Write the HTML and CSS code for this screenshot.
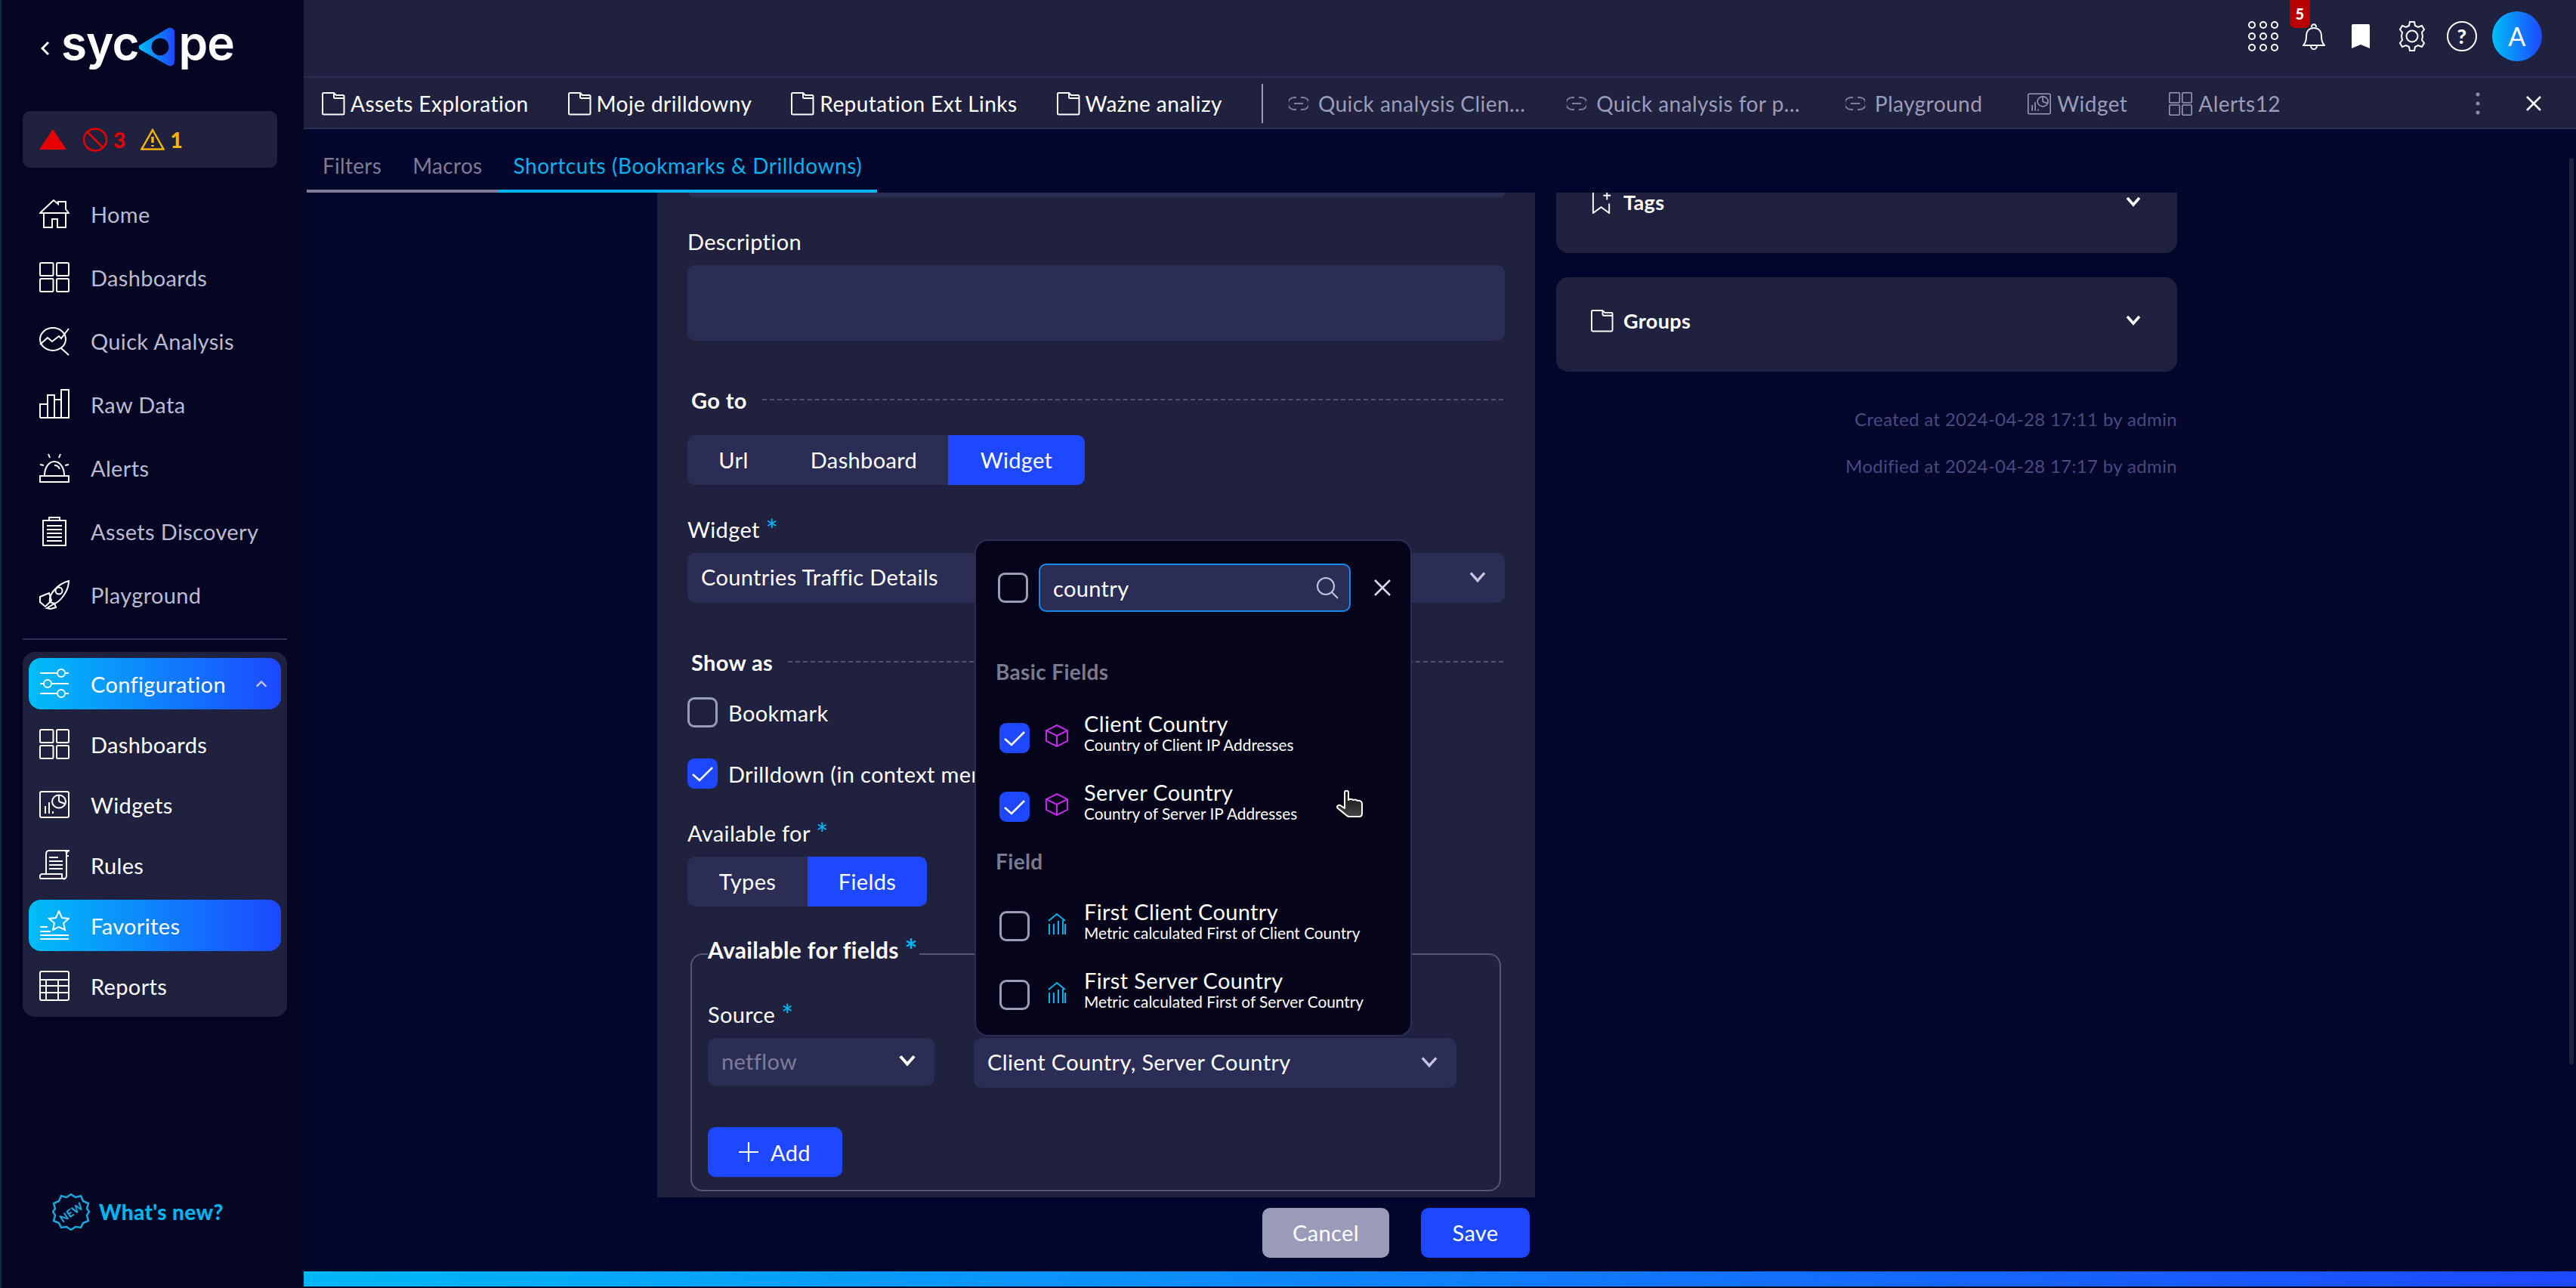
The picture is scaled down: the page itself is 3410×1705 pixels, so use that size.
FILE: index.html
```html
<!DOCTYPE html>
<html>
<head>
<meta charset="utf-8">
<title>Sycope</title>
<link rel="stylesheet" href="styles.css">
</head>
<body>
<svg class="defs" width="0" height="0">
  <symbol id="i-dash" viewBox="0 0 40 40"><rect x="1" y="1" width="17.500" height="17" rx="1.500"/><rect x="23" y="1" width="16" height="17" rx="1.500"/><rect x="1" y="22" width="17.500" height="17" rx="1.500"/><rect x="23" y="22" width="16" height="17" rx="1.500"/></symbol>
  <symbol id="i-folder" viewBox="0 0 32 32"><path d="M2 3.500a1.500 1.500 0 0 1 1.500-1.500H17l3 3h9a1.500 1.500 0 0 1 1.500 1.500V29a1.500 1.500 0 0 1-1.500 1.500H3.500A1.500 1.500 0 0 1 2 29zM17 2v5.500a1.500 1.500 0 0 0 1.500 1.500H30.500"/></symbol>
  <symbol id="i-link" viewBox="0 0 26 22"><path d="M10 3H7a8 8 0 0 0 0 16h3M16 3h3a8 8 0 0 1 0 16h-3M7 11h12"/></symbol>
  <symbol id="i-widget" viewBox="0 0 40 36"><rect x="1" y="1" width="38" height="34" rx="2"/><path d="M8 30V20M13 30V15M18 30v-3"/><ellipse cx="26" cy="14" rx="9" ry="8.500"/><path d="M26 14V5.500M26 14l8 3"/></symbol>
  <symbol id="i-check" viewBox="0 0 40 40"><path d="M7 21l9 8L33 12"/></symbol>
  <symbol id="i-chev" viewBox="0 0 20 14"><path d="M2 2l8 9 8-9"/></symbol>
  <symbol id="i-cube" viewBox="0 0 30 30"><path d="M15 1l14 7v14l-14 7-14-7V8zM1 8l14 7 14-7M15 15v14"/></symbol>
  <symbol id="i-metric" viewBox="0 0 24 30"><path d="M1 11l11-9 11 9M2 29V15M8 29V15M14 29V11M20 29V10M23 29V15"/></symbol>
</svg>

<div class="app">
  <aside class="sidebar">
    <div class="logo">
      <svg class="logo-back" viewBox="0 0 12 20"><path d="M10 2L2 10l8 8"/></svg>
      <span class="logo-text">syc</span>
      <svg class="logo-mark" viewBox="0 0 48 52">
        <defs><linearGradient id="lg" x1="0" x2="1" y1="0" y2="0"><stop offset="0" stop-color="#00bdf7"/><stop offset="1" stop-color="#1d48ff"/></linearGradient></defs>
        <path fill="url(#lg)" fill-rule="evenodd" d="M2 23L38 1.500c4-2 9 0 9 5V45.500c0 5-5 7.500-9 5L2 30c-3-2-3-5 0-7zM28 14.500a11.500 11.500 0 1 0 .01 0z"/>
      </svg>
      <span class="logo-text">pe</span>
    </div>

    <div class="alerts">
      <svg class="al-tri" viewBox="0 0 36 27"><path d="M18 0L36 27H0z"/></svg>
      <svg class="al-ban" viewBox="0 0 32 32"><ellipse cx="16" cy="16" rx="15" ry="14.500"/><path d="M6 6l20 20"/></svg>
      <span class="al-num red">3</span>
      <svg class="al-warn" viewBox="0 0 32 30"><path d="M16 2L30.500 27.500H1.500z"/><path class="warn-dot" d="M16 11v8M16 22v2"/></svg>
      <span class="al-num amber">1</span>
    </div>

    <nav class="nav">
      <a class="nav-item dim"><svg class="ico" viewBox="0 0 40 40"><path d="M1 19L19 2l6 5V4h10v10l4 5zM6 19v19h11V27h7v11h11V19"/></svg>Home</a>
      <a class="nav-item dim"><svg class="ico"><use href="#i-dash"/></svg>Dashboards</a>
      <a class="nav-item dim"><svg class="ico" viewBox="0 0 40 40"><ellipse cx="18" cy="18" rx="17" ry="15"/><path d="M1 25l10-9 6 5 9-7 3 3L39 4M29 30l10 9"/></svg>Quick Analysis</a>
      <a class="nav-item dim"><svg class="ico" viewBox="0 0 40 40"><path d="M1 38V20h10v18M11 38V8h9v30M20 38V14h9v24M29 38V1h10v37zM1 38h38"/></svg>Raw Data</a>
      <a class="nav-item dim"><svg class="ico" viewBox="0 0 40 40"><path d="M7 30c0-9 5-18 13-18s13 9 13 18M1 31h38v8H1zM1 16l5 1M39 16l-5 1M12 2l2 5M28 2l-2 5M20 17c4 0 6 2 7 5"/></svg>Alerts</a>
      <a class="nav-item dim"><svg class="ico" viewBox="0 0 40 40"><path d="M5 6h30v33H5zM13 6V2h14v4M10 13h20M10 18h20M10 23h20M10 28h20M10 33h20"/></svg>Assets Discovery</a>
      <a class="nav-item dim"><svg class="ico" viewBox="0 0 40 40"><path d="M14 30C12 20 24 6 39 2c0 14-12 28-19 30zM1 23l12-5 3 10-8 8-7-6zM10 38l10-6 2 5-7 2z"/><ellipse cx="26" cy="15" rx="4.500" ry="4.500"/></svg>Playground</a>
    </nav>

    <div class="nav-sep"></div>

    <div class="nav-group">
      <a class="nav-item pill"><svg class="ico" viewBox="0 0 40 40"><path d="M1 6h23M34 6h5M1 20h5M16 20h23M1 33h23M34 33h5"/><ellipse cx="29" cy="6" rx="5" ry="5"/><ellipse cx="11" cy="20" rx="5" ry="5"/><ellipse cx="29" cy="33" rx="5" ry="5"/></svg>Configuration<svg class="group-chev" viewBox="0 0 20 14"><path d="M2 11l8-8 8 8"/></svg></a>
      <a class="nav-item"><svg class="ico"><use href="#i-dash"/></svg>Dashboards</a>
      <a class="nav-item"><svg class="ico"><use href="#i-widget"/></svg>Widgets</a>
      <a class="nav-item"><svg class="ico" viewBox="0 0 40 40"><path d="M1 38c-1-3 0-6 3-6h26v4c0 2 2 3 4 2s2-2 2-4V6c0-3 2-5 5-5H13c-3 0-4 2-4 5v26M34 1c2 0 2 4 2 7h3M13 10h12M13 15h18M13 20h18M13 25h18M1 38h33"/></svg>Rules</a>
      <a class="nav-item pill"><svg class="ico" viewBox="0 0 40 40"><path d="M26 1l4 9 9 1-7 6 2 9-8-4-8 4 2-9-7-6 9-1zM1 22h10M1 28h14M1 33h38M1 38h38"/></svg>Favorites</a>
      <a class="nav-item"><svg class="ico" viewBox="0 0 40 40"><rect x="1" y="1" width="38" height="38" rx="2"/><path d="M1 12h38M1 20h38M1 29h38M9 12v27M25 12v27"/></svg>Reports</a>
    </div>

    <a class="whats-new">
      <svg class="new-ico" viewBox="0 0 50 50">
        <path d="M25 2l6 4 7-2 3 7 7 3-2 7 3 4-3 5 2 7-7 3-3 6-7-1-6 4-6-4-7 1-3-6-7-3 2-7-3-5 3-4-2-7 7-3 3-7 7 2z"/>
        <text x="25" y="31" transform="rotate(-35 25 25)" text-anchor="middle">NEW</text>
      </svg>
      What's new?
    </a>
  </aside>

  <main class="main">
    <header class="topbar">
      <svg class="top-grid" viewBox="0 0 42 40"><circle cx="6" cy="5" r="4"/><circle cx="21" cy="5" r="4"/><circle cx="36" cy="5" r="4"/><circle cx="6" cy="20" r="4"/><circle cx="21" cy="20" r="4"/><circle cx="36" cy="20" r="4"/><circle cx="6" cy="35" r="4"/><circle cx="21" cy="35" r="4"/><circle cx="36" cy="35" r="4"/></svg>
      <span class="bell-wrap">
        <svg class="top-bell" viewBox="0 0 30 36"><path d="M1 30c3-3 4-6 4-12 0-7 4-11 10-11s10 4 10 11c0 6 1 9 4 12zM12 6c0-5 6-5 6 0M11 30c0 7 8 7 8 0"/></svg>
        <b class="badge">5</b>
      </span>
      <svg class="top-mark" viewBox="0 0 24 32"><path d="M2 0h20a2 2 0 0 1 2 2v30l-12-5-12 5V2a2 2 0 0 1 2-2z"/></svg>
      <svg class="top-gear" viewBox="0 0 40 40"><circle cx="20" cy="20" r="7.500"/><path d="M17 1h6l1 5 4 2 5-2 3 5-3 4 1 5-1 5 3 4-3 5-5-2-4 2-1 5h-6l-1-5-4-2-5 2-3-5 3-4-1-5 1-5-3-4 3-5 5 2 4-2z"/></svg>
      <span class="top-help">?</span>
      <span class="avatar">A</span>
    </header>

    <div class="quickbar">
      <a class="qb-item"><svg class="qb-folder"><use href="#i-folder"/></svg>Assets Exploration</a>
      <a class="qb-item"><svg class="qb-folder"><use href="#i-folder"/></svg>Moje drilldowny</a>
      <a class="qb-item"><svg class="qb-folder"><use href="#i-folder"/></svg>Reputation Ext Links</a>
      <a class="qb-item"><svg class="qb-folder"><use href="#i-folder"/></svg>Ważne analizy</a>
      <span class="qb-sep"></span>
      <a class="qb-item faded"><svg class="qb-link"><use href="#i-link"/></svg>Quick analysis Clien...</a>
      <a class="qb-item faded qb-wide"><svg class="qb-link"><use href="#i-link"/></svg>Quick analysis for p...</a>
      <a class="qb-item faded qb-wide"><svg class="qb-link"><use href="#i-link"/></svg>Playground</a>
      <a class="qb-item faded"><svg class="qb-tile"><use href="#i-widget"/></svg>Widget</a>
      <a class="qb-item faded"><svg class="qb-tile"><use href="#i-dash"/></svg>Alerts12</a>
      <svg class="qb-kebab" viewBox="0 0 6 30"><circle cx="3" cy="3" r="2.500"/><circle cx="3" cy="15" r="2.500"/><circle cx="3" cy="27" r="2.500"/></svg>
      <svg class="qb-close" viewBox="0 0 22 22"><path d="M2 2l18 18M20 2L2 20"/></svg>
    </div>

    <div class="tabs">
      <a class="tab">Filters</a>
      <a class="tab">Macros</a>
      <a class="tab active">Shortcuts (Bookmarks &amp; Drilldowns)</a>
    </div>

    <div class="content">
      <section class="form-panel">
        <div class="prev-input"></div>
        <label class="field-label desc-label">Description</label>
        <div class="textarea"></div>

        <div class="divider goto"><span>Go to</span><i></i></div>
        <div class="seg">
          <span class="seg-btn w-url">Url</span>
          <span class="seg-btn w-dash">Dashboard</span>
          <span class="seg-btn on w-widget">Widget</span>
        </div>

        <label class="field-label widget-label">Widget <em>*</em></label>
        <div class="select wide">Countries Traffic Details<svg class="chev"><use href="#i-chev"/></svg></div>

        <div class="divider showas"><span>Show as</span><i></i></div>
        <div class="check-row first"><span class="check"></span>Bookmark</div>
        <div class="check-row second"><span class="check on"><svg><use href="#i-check"/></svg></span>Drilldown (in context menu)</div>

        <label class="field-label avail-label">Available for <em>*</em></label>
        <div class="seg">
          <span class="seg-btn w-types">Types</span>
          <span class="seg-btn on w-fields">Fields</span>
        </div>

        <div class="fieldset">
          <div class="legend">Available for fields <em>*</em></div>
          <label class="field-label source-label">Source <em>*</em></label>
          <div class="select-row">
            <div class="select source">netflow<svg class="chev bright"><use href="#i-chev"/></svg></div>
            <div class="select fields">Client Country, Server Country<svg class="chev"><use href="#i-chev"/></svg></div>
          </div>
          <a class="btn-add"><svg viewBox="0 0 26 26"><path d="M13 1v24M1 13h24"/></svg>Add</a>
        </div>
      </section>

      <aside class="side-col">
        <div class="card tags"><svg class="card-ico" viewBox="0 0 26 32"><path d="M1 2v29l11-8 11 8V18M20 1v12M15 7h10"/></svg>Tags<svg class="card-chev"><use href="#i-chev"/></svg></div>
        <div class="card"><svg class="card-ico"><use href="#i-folder"/></svg>Groups<svg class="card-chev"><use href="#i-chev"/></svg></div>
        <p class="meta">Created at 2024-04-28 17:11 by admin</p>
        <p class="meta">Modified at 2024-04-28 17:17 by admin</p>
      </aside>
    </div>

    <div class="actions">
      <a class="btn cancel">Cancel</a>
      <a class="btn save">Save</a>
    </div>
    <div class="progress"></div>
  </main>
</div>

<div class="scroll-thumb"></div>

<div class="popup">
  <div class="popup-head">
    <span class="check"></span>
    <div class="search">country<svg viewBox="0 0 30 30"><circle cx="13" cy="13" r="11"/><path d="M21 21l8 8"/></svg></div>
    <svg class="popup-x" viewBox="0 0 24 24"><path d="M2 2l20 20M22 2L2 22"/></svg>
  </div>
  <div class="popup-title basic">Basic Fields</div>
  <div class="opt"><span class="check on"><svg><use href="#i-check"/></svg></span><svg class="opt-ico cube"><use href="#i-cube"/></svg><div class="opt-text"><b>Client Country</b><small>Country of Client IP Addresses</small></div></div>
  <div class="opt"><span class="check on"><svg><use href="#i-check"/></svg></span><svg class="opt-ico cube"><use href="#i-cube"/></svg><div class="opt-text"><b>Server Country</b><small>Country of Server IP Addresses</small></div></div>
  <div class="popup-title field">Field</div>
  <div class="opt"><span class="check"></span><svg class="opt-ico metric"><use href="#i-metric"/></svg><div class="opt-text"><b>First Client Country</b><small>Metric calculated First of Client Country</small></div></div>
  <div class="opt"><span class="check"></span><svg class="opt-ico metric"><use href="#i-metric"/></svg><div class="opt-text"><b>First Server Country</b><small>Metric calculated First of Server Country</small></div></div>
</div>

<svg class="cursor" viewBox="0 0 36 36"><defs><linearGradient id="hand" x1="0" x2="0" y1="0" y2="1"><stop offset="0" stop-color="#111"/><stop offset="1" stop-color="#444"/></linearGradient></defs><path fill="url(#hand)" stroke="#fff" stroke-width="2" stroke-linejoin="round" d="M11 3c0-3 5-3 5 0v10c3-2 5-1 6 0 3-1 5 0 6 1 3-1 6 1 6 4v13c0 2-1 4-4 4H17c-2 0-3-1-4-2L2 24c-2-2 0-5 3-4l6 4z"/></svg>
</body>
</html>
```

FILE: styles.css
```css
* {
    box-sizing: border-box;
}
html, body {
    margin: 0;
    height: 1705px;
    overflow: hidden;
}
body {
    position: relative;
    background: #05062b;
    color: #fff;
    font-family: "Lato", "Noto Sans", sans-serif;
    font-size: 29px;
    letter-spacing: 0.35px;
}
a {
    color: inherit;
}
.defs {
    position: absolute;
}
svg {
    display: block;
    flex: none;
}
em {
    color: #00b4ef;
    font-style: normal;
    font-size: 1.35em;
    line-height: 1;
    vertical-align: -0.1em;
}

.app {
    display: flex;
    height: 1705px;
}

/* sidebar */
.sidebar {
    display: flex;
    flex-direction: column;
    width: 402px;
    flex: none;
    padding-left: 28px;
    background: #050624;
    border-left: 2px solid #06323f;
}
.logo {
    display: flex;
    align-items: center;
    height: 147px;
    padding: 0 0 20px 24px;
}
.logo-back {
    width: 12px;
    height: 20px;
    margin-right: 15px;
    fill: none;
    stroke: #fff;
    stroke-width: 3;
}
.logo-text {
    font-family: "Inter", sans-serif;
    font-size: 62px;
    font-weight: 600;
    line-height: 60px;
    margin-top: -14px;
    letter-spacing: -1px;
}
.logo-mark {
    width: 48px;
    height: 52px;
    margin: -3px 5px 0 0;
}
.alerts {
    display: flex;
    align-items: center;
    width: 337px;
    height: 75px;
    padding-left: 22px;
    background: #20213f;
    border-radius: 10px;
}
.al-tri {
    width: 36px;
    height: 27px;
    fill: #e80000;
}
.al-ban {
    width: 32px;
    height: 32px;
    margin-left: 22px;
    fill: none;
    stroke: #e80000;
    stroke-width: 2.500;
}
.al-warn {
    width: 32px;
    height: 30px;
    margin-left: 19px;
    fill: none;
    stroke: #f5b400;
    stroke-width: 2.500;
}
.warn-dot {
    stroke-width: 3.500;
}
.al-num {
    font-weight: 900;
    font-size: 28px;
    margin-left: 8px;
}
.red {
    color: #e80000;
}
.amber {
    color: #f5b400;
}
.nav {
    margin-top: 19px;
}
.nav-item {
    display: flex;
    align-items: center;
    height: 80px;
    padding-left: 14px;
    margin: 0 8px;
    color: #fff;
}
.nav .nav-item {
    height: 84px;
}
.nav-item.dim {
    color: #babbd0;
}
.ico {
    width: 40px;
    height: 40px;
    margin-right: 28px;
    fill: none;
    stroke: #fff;
    stroke-width: 2;
}
.nav-sep {
    width: 350px;
    height: 2px;
    margin-top: 16px;
    background: #2c2d55;
}
.nav-group {
    width: 350px;
    margin-top: 16px;
    padding: 2px 0 1px;
    background: #20213f;
    border-radius: 16px;
}
.nav-item.pill {
    height: 68px;
    margin: 6px 8px;
    border-radius: 16px;
    background: linear-gradient(90deg, #00bdf7, #1d48ff);
}
.group-chev {
    width: 16px;
    height: 11px;
    margin-left: auto;
    margin-right: 18px;
    fill: none;
    stroke: #c4c5dd;
    stroke-width: 3;
}
.whats-new {
    display: flex;
    align-items: center;
    margin: auto 0 76px 39px;
    color: #00b4ef;
    font-weight: 900;
    font-size: 28px;
}
.new-ico {
    width: 50px;
    height: 50px;
    margin-right: 12px;
    fill: none;
    stroke: #1aa7dc;
    stroke-width: 2.500;
}
.new-ico text {
    fill: #1aa7dc;
    stroke: none;
    font-size: 14px;
    font-weight: 900;
}

/* top bars */
.main {
    display: flex;
    flex-direction: column;
    flex: 1;
    min-width: 0;
}
.topbar {
    display: flex;
    align-items: center;
    justify-content: flex-end;
    height: 103px;
    flex: none;
    padding: 0 45px 5px 0;
    background: #20213f;
    border-bottom: 2px solid #2c2d55;
}
.top-grid {
    width: 42px;
    height: 40px;
    margin-right: 31px;
    fill: none;
    stroke: #fff;
    stroke-width: 2;
}
.bell-wrap {
    position: relative;
    margin-right: 35px;
}
.top-bell {
    width: 30px;
    height: 36px;
    fill: none;
    stroke: #fff;
    stroke-width: 2;
}
.badge {
    position: absolute;
    left: -17px;
    top: -30px;
    width: 27px;
    height: 37px;
    border-radius: 0 0 7px 7px;
    background: #b90000;
    font-size: 20px;
    font-weight: 900;
    line-height: 36px;
    text-align: center;
}
.top-mark {
    width: 24px;
    height: 32px;
    margin-right: 36px;
    fill: #fff;
}
.top-gear {
    width: 40px;
    height: 40px;
    margin-right: 26px;
    fill: none;
    stroke: #fff;
    stroke-width: 2;
}
.top-help {
    width: 40px;
    height: 40px;
    margin-right: 20px;
    border: 2px solid #fff;
    border-radius: 50%;
    font-size: 27px;
    font-weight: 900;
    line-height: 35px;
    text-align: center;
}
.avatar {
    width: 66px;
    height: 66px;
    border-radius: 50%;
    background: linear-gradient(90deg, #00bdf7, #1d48ff);
    font-size: 34px;
    line-height: 66px;
    text-align: center;
}
.quickbar {
    display: flex;
    align-items: center;
    height: 68px;
    flex: none;
    padding: 2px 0 0 23px;
    background: #20213f;
    border-bottom: 2px solid #2c2d55;
}
.qb-item {
    display: flex;
    align-items: center;
    margin-right: 51px;
    font-size: 28px;
    letter-spacing: 0.45px;
    white-space: nowrap;
}
.qb-item.faded {
    margin-right: 55px;
    color: #9a9db8;
}
.qb-item.qb-wide {
    margin-right: 60px;
}
.qb-folder {
    width: 32px;
    height: 32px;
    margin-right: 7px;
    fill: none;
    stroke: #fff;
    stroke-width: 2;
}
.qb-link {
    width: 26px;
    height: 22px;
    margin-right: 13px;
    fill: none;
    stroke: #7f8199;
    stroke-width: 2;
}
.qb-tile {
    width: 31px;
    height: 31px;
    margin-right: 8px;
    fill: none;
    stroke: #9a9db8;
    stroke-width: 2;
}
.qb-sep {
    width: 2px;
    height: 52px;
    margin: 0 34px 0 1px;
    background: #9a9db8;
}
.qb-kebab {
    width: 6px;
    height: 30px;
    margin-left: auto;
    fill: #8a8ca6;
}
.qb-close {
    width: 22px;
    height: 22px;
    margin: 0 45px 0 60px;
    fill: none;
    stroke: #fff;
    stroke-width: 2.500;
}
.tabs {
    display: flex;
    height: 84px;
    flex: none;
    padding-left: 4px;
}
.tab {
    padding: 30px 20px 0 21px;
    line-height: 36px;
    font-size: 28px;
    letter-spacing: 0.3px;
    color: #7c7d95;
    border-bottom: 4px solid #7c7d95;
}
.tab.active {
    letter-spacing: 0.55px;
    color: #00b4ef;
    border-bottom-color: #00b4ef;
}

/* form */
.content {
    display: flex;
    gap: 28px;
    flex: 1;
    min-height: 0;
    padding-left: 468px;
    overflow: hidden;
}
.form-panel {
    display: flex;
    flex-direction: column;
    align-items: flex-start;
    width: 1162px;
    flex: none;
    padding: 0 40px;
    background: #20213f;
}
.prev-input {
    width: 1080px;
    height: 6px;
    margin-left: 2px;
    flex: none;
    background: #2c2d55;
    border-radius: 0 0 8px 8px;
}
.field-label {
    display: block;
    height: 38px;
    line-height: 38px;
    flex: none;
}
.desc-label {
    margin-top: 40px;
}
.textarea {
    width: 1082px;
    height: 100px;
    margin-top: 12px;
    flex: none;
    background: #2c2d55;
    border-radius: 10px;
}
.divider {
    display: flex;
    align-items: center;
    width: 1080px;
    height: 36px;
    padding-left: 5px;
    flex: none;
    font-size: 29px;
    font-weight: 700;
}
.divider i {
    flex: 1;
    margin-left: 20px;
    border-top: 2px dashed #50516d;
}
.goto {
    margin-top: 60px;
}
.showas {
    margin-top: 60px;
}
.seg {
    display: flex;
    height: 66px;
    margin-top: 29px;
    flex: none;
    background: #2c2d55;
    border-radius: 10px;
    overflow: hidden;
}
.avail-label + .seg {
    margin-top: 13px;
}
.seg-btn {
    line-height: 66px;
    text-align: center;
}
.seg-btn.on {
    background: #1d48ff;
}
.w-url { width: 122px; }
.w-dash { width: 223px; }
.w-widget { width: 181px; }
.w-types { width: 159px; }
.w-fields { width: 158px; }
.widget-label {
    margin-top: 39px;
}
.select {
    display: flex;
    align-items: center;
    height: 66px;
    padding: 0 0 3px 18px;
    flex: none;
    background: #2c2d55;
    border-radius: 10px;
}
.select.wide {
    width: 1082px;
    margin-top: 13px;
}
.chev {
    width: 24px;
    height: 16px;
    margin-left: auto;
    margin-right: 24px;
    fill: none;
    stroke: #c4c5dd;
    stroke-width: 3;
}
.chev.bright {
    stroke: #fff;
    stroke-width: 3.500;
}
.check {
    display: block;
    width: 40px;
    height: 40px;
    flex: none;
    border: 3px solid #9a9db8;
    border-radius: 9px;
}
.check.on {
    border: 0;
    background: #1d48ff;
}
.check svg {
    width: 40px;
    height: 40px;
    fill: none;
    stroke: #fff;
    stroke-width: 2.500;
}
.check-row {
    display: flex;
    align-items: center;
    gap: 14px;
    height: 40px;
    flex: none;
    white-space: nowrap;
}
.check-row.first {
    margin-top: 29px;
}
.check-row.second {
    margin-top: 41px;
}
.avail-label {
    margin-top: 39px;
}
.fieldset {
    display: flex;
    flex-direction: column;
    align-items: flex-start;
    width: 1073px;
    height: 315px;
    margin: 62px 0 0 4px;
    padding: 0 21px;
    flex: none;
    border: 2px solid #55566f;
    border-radius: 16px;
}
.legend {
    height: 36px;
    margin-top: -26px;
    padding: 0 2px 0 0;
    background: #20213f;
    font-size: 30px;
    font-weight: 700;
    line-height: 36px;
}
.source-label {
    margin-top: 49px;
}
.select-row {
    display: flex;
    align-items: flex-start;
    gap: 52px;
    margin-top: 13px;
}
.select.source {
    width: 300px;
    height: 63px;
    color: #7c7d95;
}
.select.fields {
    width: 639px;
}
.btn-add {
    display: flex;
    align-items: center;
    width: 178px;
    height: 66px;
    margin-top: 52px;
    padding-left: 40px;
    background: #1d48ff;
    border-radius: 10px;
}
.btn-add svg {
    width: 28px;
    height: 28px;
    margin-right: 15px;
    fill: none;
    stroke: #fff;
    stroke-width: 2;
}

/* right column */
.side-col {
    width: 822px;
    flex: none;
}
.card {
    display: flex;
    align-items: center;
    height: 125px;
    padding: 0 48px 11px 45px;
    margin-bottom: 32px;
    background: #20213f;
    border-radius: 16px;
    font-size: 27px;
    font-weight: 700;
}
.card.tags {
    margin-top: -45px;
}
.card-ico {
    width: 31px;
    height: 31px;
    margin-right: 13px;
    fill: none;
    stroke: #fff;
    stroke-width: 2;
}
.card-chev {
    width: 20px;
    height: 14px;
    margin-left: auto;
    fill: none;
    stroke: #fff;
    stroke-width: 3.500;
}
.meta {
    margin: 0;
    height: 62px;
    line-height: 62px;
    text-align: right;
    font-size: 24px;
    color: #484a82;
}

/* footer */
.actions {
    display: flex;
    align-items: flex-start;
    justify-content: flex-end;
    gap: 42px;
    width: 1623px;
    height: 98px;
    padding-top: 14px;
    flex: none;
}
.btn {
    height: 66px;
    line-height: 66px;
    text-align: center;
    border-radius: 10px;
}
.cancel {
    width: 168px;
    background: #9a9bb9;
}
.save {
    width: 144px;
    background: #1d48ff;
}
.progress {
    height: 20px;
    margin-bottom: 2px;
    flex: none;
    background: linear-gradient(90deg, #00b7f5, #1d48ff);
}

/* overlays */
.scroll-thumb {
    position: absolute;
    left: 3401px;
    top: 209px;
    width: 6px;
    height: 1200px;
    background: #20213f;
    border-radius: 3px;
}
.popup {
    position: absolute;
    left: 1290px;
    top: 714px;
    width: 579px;
    height: 658px;
    background: #05041a;
    border: 2px solid #2c2d55;
    border-radius: 18px;
}
.popup-head {
    display: flex;
    align-items: center;
    height: 64px;
    margin-top: 30px;
    padding-left: 29px;
}
.search {
    display: flex;
    align-items: center;
    width: 413px;
    height: 64px;
    margin-left: 14px;
    padding-left: 17px;
    background: #2c2d55;
    border: 2px solid #1589f0;
    border-radius: 10px;
}
.search svg {
    width: 30px;
    height: 30px;
    margin-left: auto;
    margin-right: 14px;
    fill: none;
    stroke: #c4c5dd;
    stroke-width: 2;
}
.popup-x {
    width: 24px;
    height: 24px;
    margin-left: 30px;
    fill: none;
    stroke: #d8d9e8;
    stroke-width: 2.500;
}
.popup-title {
    height: 36px;
    line-height: 36px;
    padding-left: 26px;
    font-size: 28px;
    font-weight: 700;
    color: #7a7b8e;
}
.popup-title.basic {
    margin: 61px 0 24px;
}
.popup-title.field {
    margin: 9px 0 22px;
}
.opt {
    display: flex;
    align-items: center;
    height: 91px;
    padding-left: 31px;
}
.opt-ico {
    width: 30px;
    height: 30px;
    margin: -6px 21px 0 21px;
    fill: none;
    stroke-width: 2;
}
.cube {
    stroke: #c42ae8;
}
.metric {
    stroke: #00b4ef;
}
.opt-text {
    padding-bottom: 12px;
}
.opt-text b {
    display: block;
    font-weight: 400;
    font-size: 29px;
    line-height: 30px;
}
.opt-text small {
    display: block;
    font-size: 20.800px;
    letter-spacing: 0;
    line-height: 26px;
}
.cursor {
    position: absolute;
    left: 1769px;
    top: 1046px;
    width: 36px;
    height: 36px;
}
```
